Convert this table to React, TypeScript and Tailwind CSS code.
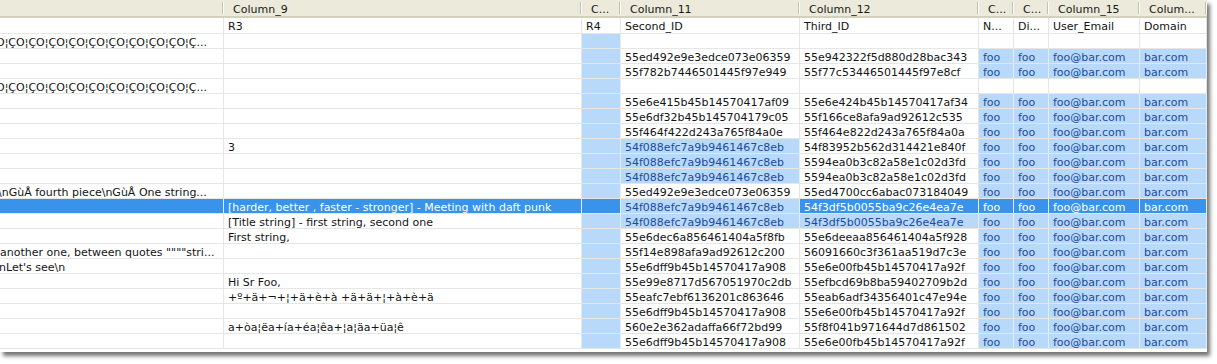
import React from "react";

const W = [
  "w-[224px]",
  "w-[358px]",
  "w-[39px]",
  "w-[179px]",
  "w-[179px]",
  "w-[35px]",
  "w-[35px]",
  "w-[91px]",
  "w-[67px]",
];

const HEADERS = ["", "Column_9", "C...", "Column_11", "Column_12", "C...", "C...", "Column_15", "Colum..."];

const CO = "O¦ÇO¦ÇO¦ÇO¦ÇO¦ÇO¦ÇO¦ÇO¦ÇO¦ÇO¦Ç...";

type Row = {
  a?: string;
  aShift?: string;
  c9?: string;
  r4?: string;
  c11?: string;
  c12?: string;
  extra?: [string, string, string, string];
  foo?: boolean;
};

const ROWS: Row[] = [
  { c9: "R3", r4: "R4", c11: "Second_ID", c12: "Third_ID", extra: ["N...", "Di...", "User_Email", "Domain"] },
  { a: CO, aShift: "ml-[-4px]" },
  { c11: "55ed492e9e3edce073e06359", c12: "55e942322f5d880d28bac343", foo: true },
  { c11: "55f782b7446501445f97e949", c12: "55f77c53446501445f97e8cf", foo: true },
  { a: CO, aShift: "ml-[-4px]" },
  { c11: "55e6e415b45b14570417af09", c12: "55e6e424b45b14570417af34", foo: true },
  { c11: "55e6df32b45b145704179c05", c12: "55f166ce8afa9ad92612c535", foo: true },
  { c11: "55f464f422d243a765f84a0e", c12: "55f464e822d243a765f84a0a", foo: true },
  { c9: "3", c11: "54f088efc7a9b9461467c8eb", c12: "54f83952b562d314421e840f", foo: true },
  { c11: "54f088efc7a9b9461467c8eb", c12: "5594ea0b3c82a58e1c02d3fd", foo: true },
  { c11: "54f088efc7a9b9461467c8eb", c12: "5594ea0b3c82a58e1c02d3fd", foo: true },
  {
    a: "\\nGùÅ fourth piece\\nGùÅ One string...",
    aShift: "ml-[-2px]",
    c11: "55ed492e9e3edce073e06359",
    c12: "55ed4700cc6abac073184049",
    foo: true,
  },
  {
    c9: "[harder, better , faster - stronger] - Meeting with daft punk",
    c11: "54f088efc7a9b9461467c8eb",
    c12: "54f3df5b0055ba9c26e4ea7e",
    foo: true,
  },
  {
    c9: "[Title string] - first string, second one",
    c11: "54f088efc7a9b9461467c8eb",
    c12: "54f3df5b0055ba9c26e4ea7e",
    foo: true,
  },
  { c9: "First string,", c11: "55e6dec6a856461404a5f8fb", c12: "55e6deeaa856461404a5f928", foo: true },
  {
    a: 'another one, between quotes """"stri...',
    aShift: "ml-[0px]",
    c11: "55f14e898afa9ad92612c200",
    c12: "56091660c3f361aa519d7c3e",
    foo: true,
  },
  {
    a: "nLet's see\\n",
    aShift: "ml-[-1px]",
    c11: "55e6dff9b45b14570417a908",
    c12: "55e6e00fb45b14570417a92f",
    foo: true,
  },
  { c9: "Hi Sr Foo,", c11: "55e99e8717d567051970c2db", c12: "55efbcd69b8ba59402709b2d", foo: true },
  {
    c9: "+º+ä+¬+¦+ä+è+à +ä+ä+¦+à+è+ä",
    c11: "55eafc7ebf6136201c863646",
    c12: "55eab6adf34356401c47e94e",
    foo: true,
  },
  { c11: "55e6dff9b45b14570417a908", c12: "55e6e00fb45b14570417a92f", foo: true },
  {
    c9: "a+òa¦ëa+ía+éa¦êa+¦a¦äa+üa¦ê",
    c11: "560e2e362adaffa66f72bd99",
    c12: "55f8f041b971644d7d861502",
    foo: true,
  },
  { c11: "55e6dff9b45b14570417a908", c12: "55e6e00fb45b14570417a92f", foo: true },
];

const SELECTED = 12;

type Tone = "plain" | "hi" | "sel";

function toneClass(t: Tone) {
  if (t === "sel") return "bg-[#3993ea] text-white border-[#e4effb]";
  if (t === "hi") return "bg-[#b9d9fb] text-[#1b4c9c] border-[#e1eefc]";
  return "bg-white text-[#141414] border-[#e6e6e6]";
}

function Cell({ w, tone, children, shift }: { w: string; tone: Tone; children?: React.ReactNode; shift?: string }) {
  return (
    <div className={`${w} shrink-0 h-full flex items-center pt-[2px] overflow-hidden whitespace-nowrap border-r ${toneClass(tone)}`}>
      <span className={shift ? shift : "pl-[4px]"}>{children}</span>
    </div>
  );
}

function DataRow({ row, idx }: { row: Row; idx: number }) {
  const sel = idx === SELECTED;
  const first = idx === 0;
  const t = (hi: boolean): Tone => {
    if (sel) return "sel";
    return hi ? "hi" : "plain";
  };
  const c11hi = !!row.c11 && row.c11.startsWith("54f088efc");
  const c12hi = !!row.c12 && row.c12.startsWith("54f3df5b");
  const fooVals: [string, string, string, string] | null = row.extra
    ? row.extra
    : row.foo
    ? ["foo", "foo", "foo@bar.com", "bar.com"]
    : null;
  return (
    <div className={`flex ${first ? "h-[16px]" : "h-[15px]"} border-b border-[#e6e6e6]`}>
      <Cell w={W[0]} tone={t(false)} shift={row.aShift}>
        {row.a}
      </Cell>
      <Cell w={W[1]} tone={t(false)}>
        {row.c9}
      </Cell>
      <Cell w={W[2]} tone={t(!first)}>
        {row.r4}
      </Cell>
      <Cell w={W[3]} tone={sel ? "hi" : t(c11hi)}>
        {row.c11}
      </Cell>
      <Cell w={W[4]} tone={t(c12hi)}>
        {row.c12}
      </Cell>
      {[5, 6, 7, 8].map((ci, k) => (
        <Cell key={ci} w={W[ci]} tone={t(!!row.foo)}>
          {fooVals ? fooVals[k] : ""}
        </Cell>
      ))}
    </div>
  );
}

export default function App() {
  return (
    <div
      className="w-[1217px] h-[364px] bg-white overflow-hidden text-[11px] leading-none"
      style={{ fontFamily: '"DejaVu Sans", Verdana, sans-serif' }}
    >
      <div className="w-[1207px] h-[352px] bg-white overflow-hidden shadow-[3px_4px_4px_rgba(0,0,0,0.55)]">
        <div className="flex h-[18px] bg-[#ebeadb] border-b-2 border-[#d3d0be]">
          {HEADERS.map((h, i) => (
            <div key={i} className={`${W[i]} shrink-0 h-full flex items-center justify-between`}>
              <span className="pl-[9px] pt-[2px] text-[#1a1a1a] whitespace-nowrap">{h}</span>
              <div className="w-[2px] h-[12px] border-l border-r border-l-[#c4c1ad] border-r-white" />
            </div>
          ))}
        </div>
        {ROWS.map((r, i) => (
          <DataRow key={i} row={r} idx={i} />
        ))}
      </div>
    </div>
  );
}
